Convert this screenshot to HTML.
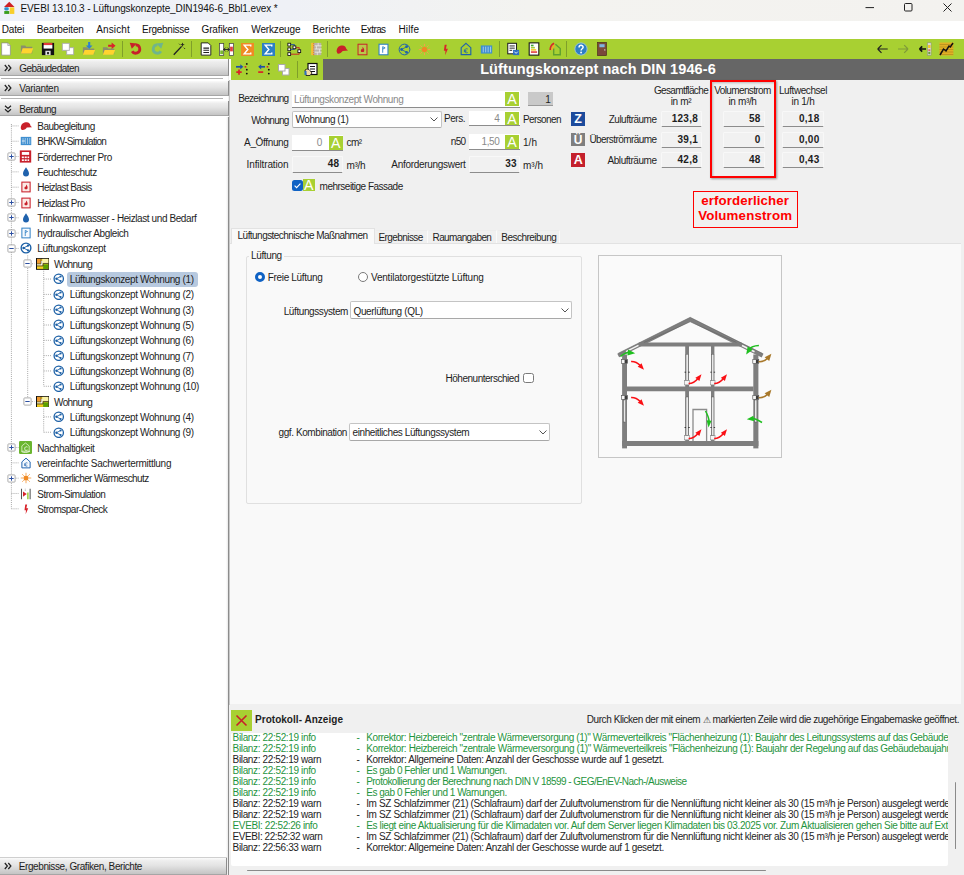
<!DOCTYPE html>
<html lang="de"><head><meta charset="utf-8"><title>EVEBI</title><style>
html,body{margin:0;padding:0}
body{width:964px;height:875px;position:relative;overflow:hidden;background:#f0f0f0;font-family:"Liberation Sans",sans-serif;font-size:10px;color:#000}
.t{position:absolute;white-space:nowrap;font-size:10px;line-height:12px;letter-spacing:-0.37px;color:#1e1e1e}
.b{font-weight:bold}
.v{font-weight:bold;font-size:10px;letter-spacing:.25px}
.g{color:#8a8a8a}
.gr{color:#1f9440}
.hd{position:absolute;left:0;width:228.5px;background:linear-gradient(#fbfbfb,#ededed 18%,#e4e4e4 45%,#c4c4c4);border-right:1px solid #8c8c8c;border-bottom:1px solid #a6a6a6;box-sizing:border-box}
.A{position:absolute;background:#a8d032;color:#fff;font-size:14.2px;line-height:14px;text-align:center;overflow:hidden;font-family:"Liberation Sans",sans-serif}
.fld{position:absolute;background:#fff;border-bottom:1px solid #8c8c8c;box-sizing:border-box}
.ro{position:absolute;background:#f1f1f1;border:1px solid #f8f8f8;border-bottom:1px solid #8c8c8c;border-radius:1.5px;box-sizing:border-box}
.cb{position:absolute;background:#fff;border:1px solid #c4c4c4;border-bottom-color:#a8a8a8;border-radius:2px;box-sizing:border-box}
</style></head><body>
<div style="position:absolute;left:0px;top:0px;width:964px;height:21px;background:linear-gradient(90deg,#eef1fa,#eff1f6 30%,#f3f3f0 55%,#f3f2ef)"></div>
<svg style="position:absolute;left:4px;top:0.6px" width="10.5" height="13.6" viewBox="0 0 12 14"><path d="M6 0 L12 6 H0 Z" fill="#cf2026"/><rect x=".3" y="6.500" width="5.200" height="3.600" rx="1.600" fill="#2f8fd0"/><rect x="6.600" y="6.500" width="5.200" height="7.500" fill="#f8cf2c"/><rect x=".3" y="10.700" width="5.700" height="3.300" fill="#3a9e1f"/></svg>
<div class="t " style="left:20.5px;top:2.8px;letter-spacing:-0.12px;color:#111">EVEBI 13.10.3 - Lüftungskonzepte_DIN1946-6_Bbl1.evex *</div>
<svg style="position:absolute;left:864px;top:2px" width="90" height="12" viewBox="0 0 90 12"><path d="M1.500 5.600h8.500" stroke="#222" stroke-width="1" fill="none"/><rect x="40.500" y="1.500" width="7.500" height="7.500" rx="1" stroke="#222" stroke-width="1" fill="none"/><path d="M79.500 1.500l8 8M87.500 1.500l-8 8" stroke="#222" stroke-width="1" fill="none"/></svg>
<div style="position:absolute;left:0px;top:21px;width:964px;height:18px;background:#fff"></div>
<div class="t " style="left:1.8px;top:23.8px;color:#111;letter-spacing:-0.191px;">Datei</div>
<div class="t " style="left:36.8px;top:23.8px;color:#111;letter-spacing:-0.145px;">Bearbeiten</div>
<div class="t " style="left:96.3px;top:23.8px;color:#111;letter-spacing:0.108px;">Ansicht</div>
<div class="t " style="left:142px;top:23.8px;color:#111;letter-spacing:-0.266px;">Ergebnisse</div>
<div class="t " style="left:201.5px;top:23.8px;color:#111;letter-spacing:-0.133px;">Grafiken</div>
<div class="t " style="left:251.3px;top:23.8px;color:#111;letter-spacing:-0.154px;">Werkzeuge</div>
<div class="t " style="left:312.5px;top:23.8px;color:#111;letter-spacing:0.108px;">Berichte</div>
<div class="t " style="left:360.8px;top:23.8px;color:#111;letter-spacing:-0.608px;">Extras</div>
<div class="t " style="left:398.5px;top:23.8px;color:#111;letter-spacing:0.108px;">Hilfe</div>
<div style="position:absolute;left:0px;top:39px;width:964px;height:20.2px;background:#a8d032"></div>
<svg style="position:absolute;left:-1.0px;top:42.0px" width="14" height="14" viewBox="0 0 16 16"><path d="M3 1h7l3 3v11H3z" fill="#fff" stroke="#888" stroke-width=".8"/><path d="M10 1v3h3" fill="#ddd" stroke="#888" stroke-width=".6"/></svg>
<svg style="position:absolute;left:20.0px;top:42.0px" width="14" height="14" viewBox="0 0 16 16"><path d="M1 4h5l1 1.5h7V13H1z" fill="#8a8f6a"/><path d="M3 7h12l-2 6H1z" fill="#ffd42e"/></svg>
<svg style="position:absolute;left:40.5px;top:42.0px" width="14" height="14" viewBox="0 0 16 16"><rect x="1" y="1" width="14" height="14" fill="#111"/><rect x="3" y="1" width="10" height="2.5" fill="#e23a3a"/><rect x="3" y="3.5" width="10" height="4" fill="#fff"/><rect x="5" y="10" width="6" height="5" fill="#ddd"/><rect x="7" y="11.5" width="2" height="2.5" fill="#111"/></svg>
<svg style="position:absolute;left:60.5px;top:42.0px" width="14" height="14" viewBox="0 0 16 16"><rect x="6.5" y="6.5" width="8" height="8" fill="#fff" stroke="#aaa" stroke-width="1"/><rect x="1.5" y="1.5" width="8" height="8" fill="#fff" stroke="#aaa" stroke-width="1"/></svg>
<svg style="position:absolute;left:81.5px;top:42.0px" width="14" height="14" viewBox="0 0 16 16"><path d="M1 6h5l1 1.5h7V14H1z" fill="#8a8f6a"/><path d="M3 9h12l-2 5.5H1z" fill="#ffd42e"/><path d="M7 0h2.4v4H12L8.2 8 4.4 4H7z" fill="#2f7fd0"/></svg>
<svg style="position:absolute;left:102.0px;top:42.0px" width="14" height="14" viewBox="0 0 16 16"><path d="M1 6h5l1 1.5h7V14H1z" fill="#8a8f6a"/><path d="M3 9h12l-2 5.5H1z" fill="#ffd42e"/><path d="M7 3h4V.5l4.5 3.8L11 8V5.5H7z" fill="#d8232a"/></svg>
<div style="position:absolute;left:121.5px;top:41px;width:1px;height:16px;background:#7f9f2a"></div>
<svg style="position:absolute;left:129.0px;top:42.0px" width="14" height="14" viewBox="0 0 16 16"><path d="M7.500 3.400A4.700 4.700 0 1 1 3.600 10.500" fill="none" stroke="#c8202a" stroke-width="3.200"/><path d="M.8 .8l8 .8-5.600 6z" fill="#c8202a"/></svg>
<svg style="position:absolute;left:149.5px;top:42.0px" width="14" height="14" viewBox="0 0 16 16"><path d="M8.500 3.400A4.700 4.700 0 1 0 12.400 10.500" fill="none" stroke="#6fb58c" stroke-width="3.200"/><path d="M15.200 .8l-8 .8 5.600 6z" fill="#6fb58c"/></svg>
<svg style="position:absolute;left:172.0px;top:42.0px" width="14" height="14" viewBox="0 0 16 16"><path d="M2 14.5L11 5" stroke="#222" stroke-width="1.6" fill="none"/><path d="M12 1v4M10 3h4M13.5 6.5l1.5 1.5M8 2l1 1" stroke="#222" stroke-width="1" fill="none"/></svg>
<div style="position:absolute;left:191px;top:41px;width:1px;height:16px;background:#7f9f2a"></div>
<svg style="position:absolute;left:198.5px;top:42.0px" width="14" height="14" viewBox="0 0 16 16"><path d="M2.5 1h8l3 3v11h-11z" fill="#fff" stroke="#222" stroke-width="1.1"/><path d="M5 7h6.5M5 9.5h6.5M5 12h6.5" stroke="#222" stroke-width="1.2"/></svg>
<svg style="position:absolute;left:219.0px;top:41.5px" width="15" height="15" viewBox="0 0 16 16"><rect x="0.5" y="1.5" width="4.5" height="13" fill="#fff" stroke="#444" stroke-width=".8"/><rect x="11" y="1.5" width="4.5" height="13" fill="#fff" stroke="#444" stroke-width=".8"/><rect x="1.3" y="9" width="3" height="4" fill="#7ab82f"/><rect x="11.8" y="5" width="3" height="5" fill="#e04040"/><path d="M5 8h6M5 8l2-2M5 8l2 2M11 8l-2-2M11 8l-2 2" stroke="#222" stroke-width="1" fill="none"/></svg>
<svg style="position:absolute;left:241.0px;top:42.5px" width="13" height="13" viewBox="0 0 16 16"><rect x="0" y="0" width="16" height="16" fill="#f08a24"/><path d="M12 4.2V2.6H4l4.4 5.4L4 13.4h8v-1.6" fill="none" stroke="#fff" stroke-width="1.8"/></svg>
<svg style="position:absolute;left:262.0px;top:42.5px" width="13" height="13" viewBox="0 0 16 16"><rect x="0" y="0" width="16" height="16" fill="#2d7fc4"/><path d="M12 4.2V2.6H4l4.4 5.4L4 13.4h8v-1.6" fill="none" stroke="#fff" stroke-width="1.8"/></svg>
<div style="position:absolute;left:279.5px;top:41px;width:1px;height:16px;background:#7f9f2a"></div>
<svg style="position:absolute;left:287.0px;top:41.5px" width="15" height="15" viewBox="0 0 16 16"><path d="M3 2.800h5v2.500M3 7.800h5V5.500" fill="none" stroke="#1f4fa8" stroke-width="1"/><path d="M9 6h4v3M3 13h10v-3" fill="none" stroke="#c8202a" stroke-width="1"/><rect x=".9" y="1.300" width="3" height="3" fill="#fff" stroke="#111" stroke-width=".9"/><rect x=".9" y="6.300" width="3" height="3" fill="#fff" stroke="#111" stroke-width=".9"/><rect x=".9" y="11.400" width="3" height="3" fill="#fff" stroke="#111" stroke-width=".9"/><rect x="6.400" y="4.200" width="3" height="3" fill="#fff" stroke="#111" stroke-width=".9"/><rect x="11.600" y="8.300" width="3" height="3" fill="#fff" stroke="#111" stroke-width=".9"/></svg>
<svg style="position:absolute;left:309.0px;top:42.0px" width="14" height="14" viewBox="0 0 16 16"><rect x="2.500" y="1" width="11.500" height="14" fill="#b9b4aa"/><path d="M3.500 1v14" stroke="#f2c12e" stroke-width="2.200"/><path d="M5.300 1v14" stroke="#e8862a" stroke-width="1.400" stroke-dasharray="1.500 1"/><path d="M6.500 4.400h8M6.500 8h8M6.500 11.600h8" stroke="#f0ede6" stroke-width="1"/><path d="M10.500 1v3.400M8.500 4.400V8M12 8v3.600M9.500 11.600V15" stroke="#f0ede6" stroke-width=".8"/></svg>
<div style="position:absolute;left:326.5px;top:41px;width:1px;height:16px;background:#7f9f2a"></div>
<svg style="position:absolute;left:335.0px;top:42.5px" width="13" height="13" viewBox="0 0 16 16"><path d="M2 10.5C2 5 5.5 3 9 3c3 0 4.500 2 5 4.500l2 1.800-6.500 .5C8 12 5 13.500 3 13z" fill="#c8202a"/></svg>
<svg style="position:absolute;left:356.0px;top:42.5px" width="13" height="13" viewBox="0 0 16 16"><rect x="2.5" y="1.5" width="11" height="13" fill="#b9c94a" stroke="#c8202a" stroke-width="1.2"/><path d="M8 4.500c2 2 2.500 3.500 2 5.500-.4 1.500-3.600 1.500-4 0-.3-1.300.5-2 1-3 .3 1 .8 1 1 0z" fill="#c8202a"/></svg>
<svg style="position:absolute;left:377.0px;top:42.5px" width="13" height="13" viewBox="0 0 16 16"><rect x="2.5" y="1.500" width="11" height="13" fill="#fff" stroke="#2d7fc4" stroke-width="1.3"/><path d="M7 12V4.500l3 1.500-3 1.500" fill="none" stroke="#2d7fc4" stroke-width="1.1"/></svg>
<svg style="position:absolute;left:397.5px;top:42.5px" width="13" height="13" viewBox="0 0 16 16"><circle cx="8" cy="8" r="6.6" fill="none" stroke="#1f62ad" stroke-width="1.2"/><circle cx="10.6" cy="4.600" r="1.700" fill="#1f62ad"/><circle cx="10.600" cy="11.400" r="1.700" fill="#1f62ad"/><circle cx="4.400" cy="8" r="1.700" fill="#1f62ad"/><path d="M4.400 8L10.600 4.600M4.400 8l6.200 3.400" stroke="#1f62ad" stroke-width="1"/></svg>
<svg style="position:absolute;left:418.0px;top:42.5px" width="13" height="13" viewBox="0 0 16 16"><circle cx="8" cy="8" r="3.400" fill="#f08a24"/><path d="M8 1v3M8 12v3M1 8h3M12 8h3M3 3l2 2M11 11l2 2M13 3l-2 2M3 13l2-2" stroke="#f5a04a" stroke-width="1.200"/></svg>
<svg style="position:absolute;left:438.5px;top:42.5px" width="13" height="13" viewBox="0 0 16 16"><path d="M7 2h2.500L8.500 7H11l-3.500 8 .5-5.500H6z" fill="#d8232a"/></svg>
<svg style="position:absolute;left:458.5px;top:42.0px" width="14" height="14" viewBox="0 0 16 16"><path d="M8 1.500l5.500 5V14.500h-11V6.500z" fill="none" stroke="#1f62ad" stroke-width="1.300"/><path d="M10 8c-2-1-3.500 0-3.500 2s1.500 3 3.500 2M5.500 9.500h3M5.500 11h3" fill="none" stroke="#1f62ad" stroke-width=".9"/></svg>
<svg style="position:absolute;left:479.5px;top:42.5px" width="13" height="13" viewBox="0 0 16 16"><rect x="1" y="3" width="14" height="10" fill="#3f8fd0"/><path d="M4 4.500v7M7 4.500v7M10 4.500v7M13 4.500v7" stroke="#bcd9f0" stroke-width="1"/></svg>
<div style="position:absolute;left:498.5px;top:41px;width:1px;height:16px;background:#7f9f2a"></div>
<svg style="position:absolute;left:506.0px;top:42.0px" width="14" height="14" viewBox="0 0 16 16"><rect x="2" y="1.500" width="10" height="12" fill="#fff" stroke="#222" stroke-width="1.200"/><path d="M4 4.500h6M4 7h6M4 9.500h3" stroke="#222" stroke-width="1.100"/><rect x="8" y="9" width="7" height="6" fill="#2d6fc0"/><path d="M9.500 11l2 2 2-2" stroke="#fff" fill="none" stroke-width="1"/></svg>
<svg style="position:absolute;left:526.5px;top:42.0px" width="14" height="14" viewBox="0 0 16 16"><rect x="2.500" y="1" width="11" height="14" fill="#fff" stroke="#111" stroke-width="1.200"/><path d="M4.500 4h3" stroke="#3aa535" stroke-width="1.800"/><path d="M4.500 6.500h4.500" stroke="#a6ce39" stroke-width="1.800"/><path d="M4.500 9h6" stroke="#f6c92b" stroke-width="1.800"/><path d="M4.500 11.500h7" stroke="#e23a3a" stroke-width="1.800"/></svg>
<svg style="position:absolute;left:548.0px;top:42.0px" width="14" height="14" viewBox="0 0 16 16"><path d="M8.500 2.500L14 7.500v7H6.500v-7" fill="none" stroke="#5fa02f" stroke-width="1.600"/><path d="M7 1.500C4 3 2.500 5.500 2.500 9" fill="none" stroke="#d8232a" stroke-width="1.800"/><path d="M7.500 4C5.500 5 4.700 7 4.700 9.500" fill="none" stroke="#f6a52b" stroke-width="1.600"/></svg>
<div style="position:absolute;left:566px;top:41px;width:1px;height:16px;background:#7f9f2a"></div>
<svg style="position:absolute;left:573.5px;top:42.0px" width="14" height="14" viewBox="0 0 16 16"><circle cx="8" cy="8" r="7" fill="#2d7fc4" stroke="#9cc4e8" stroke-width="1"/><path d="M5.800 6.200c0-3.200 4.600-3 4.600-.3 0 1.800-2.300 1.800-2.300 3.800" fill="none" stroke="#fff" stroke-width="1.700"/><circle cx="8.100" cy="12" r="1.100" fill="#fff"/></svg>
<svg style="position:absolute;left:594.5px;top:42.0px" width="14" height="14" viewBox="0 0 16 16"><rect x="3" y="0.500" width="10" height="15" fill="#7a4a3a" stroke="#4a2a20" stroke-width=".8"/><rect x="5" y="2.500" width="6" height="3.500" fill="#7fb4e0"/><circle cx="11.200" cy="9" r=".8" fill="#ddd"/></svg>
<svg style="position:absolute;left:877px;top:42px" width="80" height="14" viewBox="0 0 80 14"><path d="M.7 7h10M.7 7l3.800-3.800M.7 7l3.800 3.800" stroke="#222" stroke-width="1.200" fill="none"/><path d="M21 7h10M31 7l-3.800-3.800M31 7l-3.800 3.800" stroke="#7f9a3a" stroke-width="1.200" fill="none"/><path d="M42.500 7h6.500M42.500 7l2.700-2.700M42.500 7l2.700 2.700" stroke="#111" stroke-width="1.700" fill="none"/><rect x="50.500" y=".8" width="3.600" height="12.400" fill="#d8dccf" stroke="#8a8a7a" stroke-width=".5"/><rect x="51.100" y="3" width="2.400" height="3" fill="#f0c820"/><rect x="51.300" y="7.500" width="2" height="1.200" fill="#e23a3a"/><rect x="51.300" y="9.800" width="2" height="2.400" fill="#6a9a3a"/><rect x="62.500" y=".5" width="13.800" height="13" fill="#e2b024"/><path d="M62.500 2.500h13.800M62.500 5h13.800M62.500 7.500h13.800M62.500 10h13.800M62.500 12.500h13.800" stroke="#b08a20" stroke-width=".7"/><path d="M63 13l3.500-6 2.500 1.800 3-4.800 1.300 1L76 1" stroke="#111" stroke-width="1.500" fill="none"/></svg>
<div style="position:absolute;left:0px;top:59px;width:228px;height:816px;background:#fff"></div>
<div style="position:absolute;left:226px;top:117px;width:2.5px;height:758px;background:linear-gradient(90deg,#fff,#dedede)"></div>
<div style="position:absolute;left:228px;top:117px;width:1px;height:758px;background:#8c8c8c"></div>
<div style="position:absolute;left:229px;top:59px;width:2px;height:21px;background:#fff"></div>
<div class="hd" style="top:59px;height:16.5px"></div>
<svg style="position:absolute;left:4px;top:64px" width="8" height="8" viewBox="0 0 8 8"><path d="M.8 1l2.600 3L.8 7M4.300 1l2.600 3-2.600 3" stroke="#222" stroke-width="1.200" fill="none"/></svg>
<div class="t " style="left:19.3px;top:63.0px;letter-spacing:-0.545px;">Gebäudedaten</div>
<div style="position:absolute;left:1px;top:78px;width:222px;height:1px;background:#b4b4b4"></div>
<div class="hd" style="top:80.5px;height:15.5px"></div>
<svg style="position:absolute;left:4px;top:84.2px" width="8" height="8" viewBox="0 0 8 8"><path d="M.8 1l2.600 3L.8 7M4.300 1l2.600 3-2.600 3" stroke="#222" stroke-width="1.200" fill="none"/></svg>
<div class="t " style="left:19.3px;top:83.2px;letter-spacing:-0.303px;">Varianten</div>
<div style="position:absolute;left:1px;top:98px;width:222px;height:1px;background:#b4b4b4"></div>
<div class="hd" style="top:100.5px;height:15.5px"></div>
<svg style="position:absolute;left:4px;top:104.5px" width="8" height="8" viewBox="0 0 8 8"><path d="M1 .8l3 2.600 3-2.600M1 4.300l3 2.600 3-2.600" stroke="#222" stroke-width="1.200" fill="none"/></svg>
<div class="t " style="left:19.3px;top:103.5px;letter-spacing:-0.479px;">Beratung</div>
<div style="position:absolute;left:0px;top:856.5px;width:227px;height:1px;background:#cfcfcf"></div>
<div class="hd" style="top:857.5px;height:17.5px;width:227px"></div>
<svg style="position:absolute;left:4px;top:861.5px" width="8" height="8" viewBox="0 0 8 8"><path d="M.8 1l2.600 3L.8 7M4.300 1l2.600 3-2.600 3" stroke="#222" stroke-width="1.200" fill="none"/></svg>
<div class="t " style="left:18.8px;top:860.6px;letter-spacing:-0.414px;">Ergebnisse, Grafiken, Berichte</div>
<svg style="position:absolute;left:0;top:117px" width="226" height="410" viewBox="0 0 226 410"><path d="M11.4 7V391.8M27.7 138.43V284.59M43.7 153.74V269.27M43.7 291.59V315.22M11.4 8.9H18.5M11.4 24.22H18.5M11.4 39.53H18.5M11.4 54.85H18.5M11.4 70.16H18.5M11.4 85.48H18.5M11.4 100.8H18.5M11.4 116.11H18.5M11.4 131.43H18.5M27.7 146.74H34.3M43.7 162.06H52M43.7 177.38H52M43.7 192.69H52M43.7 208.01H52M43.7 223.32H52M43.7 238.64H52M43.7 253.96H52M43.7 269.27H52M27.7 284.59H34.3M43.7 299.9H52M43.7 315.22H52M11.4 330.54H18.5M11.4 345.85H18.5M11.4 361.17H18.5M11.4 376.48H18.5M11.4 391.8H18.5" stroke="#a8a8a8" stroke-width="1" stroke-dasharray="1 1.100" fill="none"/></svg>
<div style="position:absolute;left:66.7px;top:271.8px;width:131.3px;height:15px;background:#b7c9df;border-radius:3px"></div>
<svg style="position:absolute;left:19.5px;top:119.9px" width="12" height="12" viewBox="0 0 16 16"><path d="M1 11C1 5 5 3 9 3c3 0 4.500 2 5 4.500l2 2-7 .5C8 12.500 4.500 14 2 13z" fill="#c8202a"/></svg>
<div class="t " style="left:37.3px;top:120.9px;letter-spacing:-0.500px;">Baubegleitung</div>
<svg style="position:absolute;left:19.5px;top:135.2px" width="12" height="12" viewBox="0 0 16 16"><rect x="1" y="2.500" width="14" height="11" fill="#3f8fd0"/><path d="M4 4v8M7 4v8M10 4v8M13 4v8" stroke="#bcd9f0" stroke-width="1"/><path d="M2.500 8h4" stroke="#fff" stroke-width="1"/></svg>
<div class="t " style="left:37.3px;top:136.2px;letter-spacing:-0.734px;">BHKW-Simulation</div>
<svg style="position:absolute;left:6.9px;top:152.03px" width="9" height="9" viewBox="0 0 9 9"><rect x=".9" y=".9" width="7.200" height="7.200" rx=".8" fill="#fff" stroke="#a4a4a4" stroke-width=".9"/><path d="M2.300 4.500h4.400" stroke="#2c4fa0" stroke-width="1"/><path d="M4.500 2.300v4.400" stroke="#2c4fa0" stroke-width="1"/></svg>
<svg style="position:absolute;left:19.0px;top:150.0px" width="13" height="13" viewBox="0 0 16 16"><rect x="1" y="0.500" width="14" height="15" fill="#c8202a"/><rect x="3.500" y="2.500" width="9" height="3.500" fill="#fff"/><rect x="3.500" y="8" width="2.500" height="2" fill="#fff"/><rect x="7" y="8" width="2.500" height="2" fill="#fff"/><rect x="10.500" y="8" width="2" height="2" fill="#fff"/><rect x="3.500" y="11.500" width="2.500" height="2" fill="#fff"/><rect x="7" y="11.500" width="2.500" height="2" fill="#fff"/><rect x="10.500" y="11.500" width="2" height="2" fill="#fff"/></svg>
<div class="t " style="left:37.3px;top:151.5px;letter-spacing:-0.424px;">Förderrechner Pro</div>
<svg style="position:absolute;left:19.5px;top:165.8px" width="12" height="12" viewBox="0 0 16 16"><path d="M8 1.500c2 3.500 4 5.500 4 8.500a4 4 0 0 1-8 0c0-3 2-5 4-8.500z" fill="#1f62ad"/></svg>
<div class="t " style="left:37.3px;top:166.8px;letter-spacing:-0.428px;">Feuchteschutz</div>
<svg style="position:absolute;left:19.5px;top:181.2px" width="12" height="12" viewBox="0 0 16 16"><rect x="2.500" y="1.500" width="11" height="13" fill="#fbe9e4" stroke="#c8202a" stroke-width="1.400"/><path d="M8 4.500c2 2 2.500 3.500 2 5.500-.4 1.500-3.600 1.500-4 0-.3-1.300.5-2 1-3 .3 1 .8 1 1 0z" fill="#c8202a"/></svg>
<div class="t " style="left:37.3px;top:182.2px;letter-spacing:-0.594px;">Heizlast Basis</div>
<svg style="position:absolute;left:6.9px;top:197.98px" width="9" height="9" viewBox="0 0 9 9"><rect x=".9" y=".9" width="7.200" height="7.200" rx=".8" fill="#fff" stroke="#a4a4a4" stroke-width=".9"/><path d="M2.300 4.500h4.400" stroke="#2c4fa0" stroke-width="1"/><path d="M4.500 2.300v4.400" stroke="#2c4fa0" stroke-width="1"/></svg>
<svg style="position:absolute;left:19.5px;top:196.5px" width="12" height="12" viewBox="0 0 16 16"><rect x="2.500" y="1.500" width="11" height="13" fill="#fbe9e4" stroke="#c8202a" stroke-width="1.400"/><path d="M8 4.500c2 2 2.500 3.500 2 5.500-.4 1.500-3.600 1.500-4 0-.3-1.300.5-2 1-3 .3 1 .8 1 1 0z" fill="#c8202a"/></svg>
<div class="t " style="left:37.3px;top:197.5px;letter-spacing:-0.531px;">Heizlast Pro</div>
<svg style="position:absolute;left:6.9px;top:213.3px" width="9" height="9" viewBox="0 0 9 9"><rect x=".9" y=".9" width="7.200" height="7.200" rx=".8" fill="#fff" stroke="#a4a4a4" stroke-width=".9"/><path d="M2.300 4.500h4.400" stroke="#2c4fa0" stroke-width="1"/><path d="M4.500 2.300v4.400" stroke="#2c4fa0" stroke-width="1"/></svg>
<svg style="position:absolute;left:19.5px;top:211.8px" width="12" height="12" viewBox="0 0 16 16"><path d="M8 1.500c2 3.500 4 5.500 4 8.500a4 4 0 0 1-8 0c0-3 2-5 4-8.500z" fill="#1f62ad"/></svg>
<div class="t " style="left:37.3px;top:212.8px;letter-spacing:-0.404px;">Trinkwarmwasser - Heizlast und Bedarf</div>
<svg style="position:absolute;left:6.9px;top:228.61px" width="9" height="9" viewBox="0 0 9 9"><rect x=".9" y=".9" width="7.200" height="7.200" rx=".8" fill="#fff" stroke="#a4a4a4" stroke-width=".9"/><path d="M2.300 4.500h4.400" stroke="#2c4fa0" stroke-width="1"/><path d="M4.500 2.300v4.400" stroke="#2c4fa0" stroke-width="1"/></svg>
<svg style="position:absolute;left:19.5px;top:227.1px" width="12" height="12" viewBox="0 0 16 16"><rect x="2.500" y="1.500" width="11" height="13" fill="#f4f9fe" stroke="#2d7fc4" stroke-width="1.300"/><path d="M7 12V4.500l3 1.500-3 1.500" fill="none" stroke="#2d7fc4" stroke-width="1.100"/></svg>
<div class="t " style="left:37.3px;top:228.1px;letter-spacing:-0.403px;">hydraulischer Abgleich</div>
<svg style="position:absolute;left:6.9px;top:243.93px" width="9" height="9" viewBox="0 0 9 9"><rect x=".9" y=".9" width="7.200" height="7.200" rx=".8" fill="#fff" stroke="#a4a4a4" stroke-width=".9"/><path d="M2.300 4.500h4.400" stroke="#2c4fa0" stroke-width="1"/></svg>
<svg style="position:absolute;left:19.5px;top:242.4px" width="12" height="12" viewBox="0 0 16 16"><circle cx="8" cy="8" r="6.500" fill="#fff" stroke="#1c60a6" stroke-width="1.800"/><circle cx="10.600" cy="4.900" r="1.500" fill="#1c60a6"/><circle cx="10.600" cy="11.100" r="1.500" fill="#1c60a6"/><circle cx="4.700" cy="8" r="1.600" fill="#1c60a6"/><path d="M4.700 8L10.600 4.900M4.700 8l5.900 3.100" stroke="#1c60a6" stroke-width="1.200"/></svg>
<div class="t " style="left:37.3px;top:243.4px;letter-spacing:-0.337px;">Lüftungskonzept</div>
<svg style="position:absolute;left:23.2px;top:259.24px" width="9" height="9" viewBox="0 0 9 9"><rect x=".9" y=".9" width="7.200" height="7.200" rx=".8" fill="#fff" stroke="#a4a4a4" stroke-width=".9"/><path d="M2.300 4.500h4.400" stroke="#2c4fa0" stroke-width="1"/></svg>
<svg style="position:absolute;left:35.500px;top:257.8px" width="13.300" height="11.800" viewBox="0 0 16 16" preserveAspectRatio="none"><rect x=".6" y=".6" width="14.800" height="14.800" fill="#f6d020" stroke="#111" stroke-width="1.200"/><rect x="1.200" y="1.200" width="4.600" height="6.300" fill="#f09a30"/><rect x="7.600" y="1.200" width="7.200" height="6" fill="#faf2a8"/><rect x="8.600" y="8.600" width="6.200" height="6.200" fill="#5aa000"/><path d="M1.200 9.300h5.800V4.200" stroke="#f4f4f4" stroke-width="1.900" fill="none"/><path d="M1.200 10.800h7.300V7.400h6.300" stroke="#222" stroke-width=".9" fill="none"/><path d="M6 1.200v6.700H1.200" stroke="#222" stroke-width=".7" fill="none"/></svg>
<div class="t " style="left:54px;top:258.7px;letter-spacing:-0.622px;">Wohnung</div>
<svg style="position:absolute;left:53.2px;top:273.3px" width="11.5" height="11.5" viewBox="0 0 16 16"><circle cx="8" cy="8" r="6.500" fill="#fff" stroke="#1c60a6" stroke-width="1.800"/><circle cx="10.600" cy="4.900" r="1.500" fill="#1c60a6"/><circle cx="10.600" cy="11.100" r="1.500" fill="#1c60a6"/><circle cx="4.700" cy="8" r="1.600" fill="#1c60a6"/><path d="M4.700 8L10.600 4.900M4.700 8l5.900 3.100" stroke="#1c60a6" stroke-width="1.200"/></svg>
<div class="t " style="left:69.7px;top:274.1px;letter-spacing:-0.366px;">Lüftungskonzept Wohnung (1)</div>
<svg style="position:absolute;left:53.2px;top:288.6px" width="11.5" height="11.5" viewBox="0 0 16 16"><circle cx="8" cy="8" r="6.500" fill="#fff" stroke="#1c60a6" stroke-width="1.800"/><circle cx="10.600" cy="4.900" r="1.500" fill="#1c60a6"/><circle cx="10.600" cy="11.100" r="1.500" fill="#1c60a6"/><circle cx="4.700" cy="8" r="1.600" fill="#1c60a6"/><path d="M4.700 8L10.600 4.900M4.700 8l5.900 3.100" stroke="#1c60a6" stroke-width="1.200"/></svg>
<div class="t " style="left:69.7px;top:289.4px;letter-spacing:-0.366px;">Lüftungskonzept Wohnung (2)</div>
<svg style="position:absolute;left:53.2px;top:303.9px" width="11.5" height="11.5" viewBox="0 0 16 16"><circle cx="8" cy="8" r="6.500" fill="#fff" stroke="#1c60a6" stroke-width="1.800"/><circle cx="10.600" cy="4.900" r="1.500" fill="#1c60a6"/><circle cx="10.600" cy="11.100" r="1.500" fill="#1c60a6"/><circle cx="4.700" cy="8" r="1.600" fill="#1c60a6"/><path d="M4.700 8L10.600 4.900M4.700 8l5.900 3.100" stroke="#1c60a6" stroke-width="1.200"/></svg>
<div class="t " style="left:69.7px;top:304.7px;letter-spacing:-0.366px;">Lüftungskonzept Wohnung (3)</div>
<svg style="position:absolute;left:53.2px;top:319.3px" width="11.5" height="11.5" viewBox="0 0 16 16"><circle cx="8" cy="8" r="6.500" fill="#fff" stroke="#1c60a6" stroke-width="1.800"/><circle cx="10.600" cy="4.900" r="1.500" fill="#1c60a6"/><circle cx="10.600" cy="11.100" r="1.500" fill="#1c60a6"/><circle cx="4.700" cy="8" r="1.600" fill="#1c60a6"/><path d="M4.700 8L10.600 4.900M4.700 8l5.900 3.100" stroke="#1c60a6" stroke-width="1.200"/></svg>
<div class="t " style="left:69.7px;top:320.0px;letter-spacing:-0.366px;">Lüftungskonzept Wohnung (5)</div>
<svg style="position:absolute;left:53.2px;top:334.6px" width="11.5" height="11.5" viewBox="0 0 16 16"><circle cx="8" cy="8" r="6.500" fill="#fff" stroke="#1c60a6" stroke-width="1.800"/><circle cx="10.600" cy="4.900" r="1.500" fill="#1c60a6"/><circle cx="10.600" cy="11.100" r="1.500" fill="#1c60a6"/><circle cx="4.700" cy="8" r="1.600" fill="#1c60a6"/><path d="M4.700 8L10.600 4.900M4.700 8l5.900 3.100" stroke="#1c60a6" stroke-width="1.200"/></svg>
<div class="t " style="left:69.7px;top:335.3px;letter-spacing:-0.366px;">Lüftungskonzept Wohnung (6)</div>
<svg style="position:absolute;left:53.2px;top:349.9px" width="11.5" height="11.5" viewBox="0 0 16 16"><circle cx="8" cy="8" r="6.500" fill="#fff" stroke="#1c60a6" stroke-width="1.800"/><circle cx="10.600" cy="4.900" r="1.500" fill="#1c60a6"/><circle cx="10.600" cy="11.100" r="1.500" fill="#1c60a6"/><circle cx="4.700" cy="8" r="1.600" fill="#1c60a6"/><path d="M4.700 8L10.600 4.900M4.700 8l5.900 3.100" stroke="#1c60a6" stroke-width="1.200"/></svg>
<div class="t " style="left:69.7px;top:350.6px;letter-spacing:-0.366px;">Lüftungskonzept Wohnung (7)</div>
<svg style="position:absolute;left:53.2px;top:365.2px" width="11.5" height="11.5" viewBox="0 0 16 16"><circle cx="8" cy="8" r="6.500" fill="#fff" stroke="#1c60a6" stroke-width="1.800"/><circle cx="10.600" cy="4.900" r="1.500" fill="#1c60a6"/><circle cx="10.600" cy="11.100" r="1.500" fill="#1c60a6"/><circle cx="4.700" cy="8" r="1.600" fill="#1c60a6"/><path d="M4.700 8L10.600 4.900M4.700 8l5.900 3.100" stroke="#1c60a6" stroke-width="1.200"/></svg>
<div class="t " style="left:69.7px;top:366.0px;letter-spacing:-0.366px;">Lüftungskonzept Wohnung (8)</div>
<svg style="position:absolute;left:53.2px;top:380.5px" width="11.5" height="11.5" viewBox="0 0 16 16"><circle cx="8" cy="8" r="6.500" fill="#fff" stroke="#1c60a6" stroke-width="1.800"/><circle cx="10.600" cy="4.900" r="1.500" fill="#1c60a6"/><circle cx="10.600" cy="11.100" r="1.500" fill="#1c60a6"/><circle cx="4.700" cy="8" r="1.600" fill="#1c60a6"/><path d="M4.700 8L10.600 4.900M4.700 8l5.900 3.100" stroke="#1c60a6" stroke-width="1.200"/></svg>
<div class="t " style="left:69.7px;top:381.3px;letter-spacing:-0.359px;">Lüftungskonzept Wohnung (10)</div>
<svg style="position:absolute;left:23.2px;top:397.09px" width="9" height="9" viewBox="0 0 9 9"><rect x=".9" y=".9" width="7.200" height="7.200" rx=".8" fill="#fff" stroke="#a4a4a4" stroke-width=".9"/><path d="M2.300 4.500h4.400" stroke="#2c4fa0" stroke-width="1"/></svg>
<svg style="position:absolute;left:35.500px;top:395.7px" width="13.300" height="11.800" viewBox="0 0 16 16" preserveAspectRatio="none"><rect x=".6" y=".6" width="14.800" height="14.800" fill="#f6d020" stroke="#111" stroke-width="1.200"/><rect x="1.200" y="1.200" width="4.600" height="6.300" fill="#f09a30"/><rect x="7.600" y="1.200" width="7.200" height="6" fill="#faf2a8"/><rect x="8.600" y="8.600" width="6.200" height="6.200" fill="#5aa000"/><path d="M1.200 9.300h5.800V4.200" stroke="#f4f4f4" stroke-width="1.900" fill="none"/><path d="M1.200 10.800h7.300V7.400h6.300" stroke="#222" stroke-width=".9" fill="none"/><path d="M6 1.200v6.700H1.200" stroke="#222" stroke-width=".7" fill="none"/></svg>
<div class="t " style="left:54px;top:396.6px;letter-spacing:-0.622px;">Wohnung</div>
<svg style="position:absolute;left:53.2px;top:411.2px" width="11.5" height="11.5" viewBox="0 0 16 16"><circle cx="8" cy="8" r="6.500" fill="#fff" stroke="#1c60a6" stroke-width="1.800"/><circle cx="10.600" cy="4.900" r="1.500" fill="#1c60a6"/><circle cx="10.600" cy="11.100" r="1.500" fill="#1c60a6"/><circle cx="4.700" cy="8" r="1.600" fill="#1c60a6"/><path d="M4.700 8L10.600 4.900M4.700 8l5.900 3.100" stroke="#1c60a6" stroke-width="1.200"/></svg>
<div class="t " style="left:69.7px;top:411.9px;letter-spacing:-0.366px;">Lüftungskonzept Wohnung (4)</div>
<svg style="position:absolute;left:53.2px;top:426.5px" width="11.5" height="11.5" viewBox="0 0 16 16"><circle cx="8" cy="8" r="6.500" fill="#fff" stroke="#1c60a6" stroke-width="1.800"/><circle cx="10.600" cy="4.900" r="1.500" fill="#1c60a6"/><circle cx="10.600" cy="11.100" r="1.500" fill="#1c60a6"/><circle cx="4.700" cy="8" r="1.600" fill="#1c60a6"/><path d="M4.700 8L10.600 4.900M4.700 8l5.900 3.100" stroke="#1c60a6" stroke-width="1.200"/></svg>
<div class="t " style="left:69.7px;top:427.2px;letter-spacing:-0.366px;">Lüftungskonzept Wohnung (9)</div>
<svg style="position:absolute;left:6.9px;top:443.04px" width="9" height="9" viewBox="0 0 9 9"><rect x=".9" y=".9" width="7.200" height="7.200" rx=".8" fill="#fff" stroke="#a4a4a4" stroke-width=".9"/><path d="M2.300 4.500h4.400" stroke="#2c4fa0" stroke-width="1"/><path d="M4.500 2.300v4.400" stroke="#2c4fa0" stroke-width="1"/></svg>
<svg style="position:absolute;left:19.0px;top:441.0px" width="13" height="13" viewBox="0 0 16 16"><rect x="0" y="0" width="16" height="16" rx="1.500" fill="#6ab52f"/><path d="M8 2.500l4.500 3.500v6.500h-9V6z" fill="none" stroke="#d8f0c0" stroke-width="1.100"/><path d="M10.500 7.500c-2-1-3.500 0-3.500 2s1.500 2.500 3.500 1.500M3 13c2.500 1.500 7.500 1.500 10.500-.5" fill="none" stroke="#fff" stroke-width="1"/></svg>
<div class="t " style="left:37.3px;top:442.5px;letter-spacing:-0.408px;">Nachhaltigkeit</div>
<svg style="position:absolute;left:19.5px;top:456.9px" width="12" height="12" viewBox="0 0 16 16"><path d="M8 1.500l5.500 5V14.500h-11V6.500z" fill="#f4f9fe" stroke="#1f62ad" stroke-width="1.300"/><path d="M10 8c-2-1-3.500 0-3.500 2s1.500 3 3.500 2M5.500 9.500h3M5.500 11h3" fill="none" stroke="#1f62ad" stroke-width=".9"/></svg>
<div class="t " style="left:37.3px;top:457.9px;letter-spacing:-0.290px;">vereinfachte Sachwertermittlung</div>
<svg style="position:absolute;left:6.9px;top:473.67px" width="9" height="9" viewBox="0 0 9 9"><rect x=".9" y=".9" width="7.200" height="7.200" rx=".8" fill="#fff" stroke="#a4a4a4" stroke-width=".9"/><path d="M2.300 4.500h4.400" stroke="#2c4fa0" stroke-width="1"/><path d="M4.500 2.300v4.400" stroke="#2c4fa0" stroke-width="1"/></svg>
<svg style="position:absolute;left:19.5px;top:472.2px" width="12" height="12" viewBox="0 0 16 16"><circle cx="8" cy="8" r="3.400" fill="#f08a24"/><path d="M8 1v3M8 12v3M1 8h3M12 8h3M3 3l2 2M11 11l2 2M13 3l-2 2M3 13l2-2" stroke="#f5a04a" stroke-width="1.200"/></svg>
<div class="t " style="left:37.3px;top:473.2px;letter-spacing:-0.595px;">Sommerlicher Wärmeschutz</div>
<svg style="position:absolute;left:19.5px;top:487.5px" width="12" height="12" viewBox="0 0 16 16"><path d="M2 1v14M13.500 1v14" stroke="#555" stroke-width="1.400"/><path d="M4 4.500l5 3.500-5 3.500z" fill="#d8232a"/><path d="M10.500 6v9" stroke="#9ace3a" stroke-width="2"/><path d="M7 1v4" stroke="#888" stroke-width="1" stroke-dasharray="1 1"/></svg>
<div class="t " style="left:37.3px;top:488.5px;letter-spacing:-0.542px;">Strom-Simulation</div>
<svg style="position:absolute;left:19.5px;top:502.8px" width="12" height="12" viewBox="0 0 16 16"><path d="M7 2h2.500L8.500 7H11l-3.500 8 .5-5.500H6z" fill="#d8232a"/></svg>
<div class="t " style="left:37.3px;top:503.8px;letter-spacing:-0.525px;">Stromspar-Check</div>
<div style="position:absolute;left:231px;top:59px;width:92.3px;height:20.8px;background:#a8d032"></div>
<div style="position:absolute;left:323.3px;top:59px;width:640.7px;height:20.5px;background:#666"></div>
<div class="t " style="left:448px;width:300px;text-align:center;top:60.2px;font-weight:bold;font-size:14.500px;letter-spacing:0px;color:#fff;line-height:18px"><span style="letter-spacing:0.090px;">Lüftungskonzept nach DIN 1946-6</span></div>
<svg style="position:absolute;left:235px;top:62px" width="15" height="15" viewBox="0 0 15 15"><path d="M1 4.800h5.500" stroke="#1f4fa8" stroke-width="1.700" fill="none"/><path d="M5.300 2.200l3 2.600-3 2.600z" fill="#1f4fa8"/><path d="M1.300 10.100h5.400M4 7.400v5.400" stroke="#d8232a" stroke-width="1.700"/><circle cx="11.800" cy="1.900" r=".9" fill="#111"/><circle cx="11.800" cy="7.700" r=".9" fill="#111"/><circle cx="11.800" cy="11.600" r=".9" fill="#111"/><rect x="9.700" y="4" width="1.600" height="1.600" fill="#d8232a"/></svg>
<svg style="position:absolute;left:256.5px;top:62px" width="15" height="15" viewBox="0 0 15 15"><path d="M3 4.800h5" stroke="#1f4fa8" stroke-width="1.700" fill="none"/><path d="M4.200 2.200l-3 2.600 3 2.600z" fill="#1f4fa8"/><path d="M1.200 10.100h5" stroke="#d8232a" stroke-width="1.700"/><circle cx="11.800" cy="1.900" r=".9" fill="#111"/><circle cx="11.800" cy="7.700" r=".9" fill="#111"/><circle cx="11.800" cy="11.600" r=".9" fill="#111"/><rect x="9.700" y="4" width="1.600" height="1.600" fill="#d8232a"/></svg>
<svg style="position:absolute;left:277px;top:63px" width="13" height="13" viewBox="0 0 13 13"><rect x="5.500" y="5.500" width="6.500" height="6.500" fill="#fff" stroke="#aaa" stroke-width="1"/><rect x="1.500" y="1.500" width="6.500" height="6.500" fill="#fff" stroke="#aaa" stroke-width="1"/></svg>
<div style="position:absolute;left:296.5px;top:61px;width:1px;height:17px;background:#7f9f2a"></div>
<svg style="position:absolute;left:304px;top:62px" width="15" height="15" viewBox="0 0 15 15"><rect x="4" y="1.500" width="9" height="11" fill="#fff" stroke="#111" stroke-width="1.200"/><path d="M6 4.500h5M6 7h5M6 9.500h5" stroke="#111" stroke-width="1"/><path d="M1 8c2-1.500 4-1 5 .5l2 2.500-2 2.500H2z" fill="#f0d9a0" stroke="#111" stroke-width=".8"/><rect x="0.500" y="9" width="2" height="4" fill="#2d6fc0"/></svg>
<div style="position:absolute;left:229px;top:80px;width:1px;height:625px;background:#c8c8c8"></div>
<div class="t " style="right:675.5px;top:93.4px;letter-spacing:-0.679px;">Bezeichnung</div>
<div class="fld" style="left:292px;top:91px;width:228px;height:16.5px"></div>
<div class="t g" style="left:294px;top:93.5px;letter-spacing:-0.413px;">Lüftungskonzept Wohnung</div>
<div class="A" style="left:505px;top:92px;width:14px;height:14px;line-height:15px">A</div>
<div style="position:absolute;left:527.5px;top:91.7px;width:25.5px;height:14.5px;background:#c9c9c9;border-bottom:1px solid #9a9a9a;box-sizing:border-box"></div>
<div class="t " style="right:413.5px;top:93.5px;">1</div>
<div class="t " style="right:675.5px;top:114.6px;letter-spacing:-0.775px;">Wohnung</div>
<div class="cb" style="left:291.500px;top:110.500px;width:150px;height:17.500px"></div>
<div class="t " style="left:295.5px;top:114.3px;letter-spacing:-0.442px;">Wohnung (1)</div>
<svg style="position:absolute;left:430px;top:117.0px" width="8" height="5" viewBox="0 0 8 5"><path d="M.5 .5l3.500 3.500L7.500 .5" stroke="#555" stroke-width="1" fill="none"/></svg>
<div class="t " style="left:444px;top:112.6px;letter-spacing:-0.454px;">Pers.</div>
<div class="fld" style="left:469px;top:110.5px;width:51px;height:15.5px"></div>
<div class="t g" style="right:464.5px;top:113.0px;">4</div>
<div class="A" style="left:505px;top:111.5px;width:14px;height:13.5px;line-height:14.5px">A</div>
<div class="t " style="left:523px;top:114.0px;letter-spacing:-0.615px;">Personen</div>
<div class="t " style="right:675.5px;top:136.8px;letter-spacing:-0.358px;">A_Öffnung</div>
<div class="fld" style="left:292px;top:134.5px;width:51px;height:16px"></div>
<div class="t g" style="right:642px;top:137.0px;">0</div>
<div class="A" style="left:328.5px;top:135.5px;width:14.5px;height:14px;line-height:15px">A</div>
<div class="t " style="left:346.5px;top:137.3px;letter-spacing:-0.549px;">cm²</div>
<div class="t " style="right:498.5px;top:136.3px;letter-spacing:-0.675px;">n50</div>
<div class="fld" style="left:469px;top:133.5px;width:51px;height:16px"></div>
<div class="t g" style="right:464.5px;top:136.0px;">1,50</div>
<div class="A" style="left:505px;top:134.5px;width:14px;height:14px;line-height:15px">A</div>
<div class="t " style="left:523px;top:137.3px;letter-spacing:0.037px;">1/h</div>
<div class="t " style="right:675.5px;top:158.7px;letter-spacing:-0.118px;">Infiltration</div>
<div class="ro" style="left:292px;top:156px;width:51px;height:16.5px"></div>
<div class="t v" style="right:624.7px;top:158.2px;">48</div>
<div class="t " style="left:346.5px;top:159.5px;letter-spacing:-0.286px;">m³/h</div>
<div class="t " style="right:498.5px;top:158.7px;letter-spacing:-0.293px;">Anforderungswert</div>
<div class="ro" style="left:469px;top:156px;width:51px;height:16.5px"></div>
<div class="t v" style="right:447.2px;top:158.2px;">33</div>
<div class="t " style="left:523px;top:159.5px;letter-spacing:0.000px;">m³/h</div>
<div style="position:absolute;left:291.5px;top:180.3px;width:11px;height:11px;background:#0f62c4;border-radius:2.500px"><svg width="11" height="11" viewBox="0 0 11 11" style="display:block"><path d="M2.600 5.600l2 2 3.800-4" stroke="#fff" stroke-width="1.100" fill="none"/></svg></div>
<div class="A" style="left:303px;top:179.2px;width:11.6px;height:12px;line-height:13px">A</div>
<div class="t " style="left:319.6px;top:180.6px;letter-spacing:-0.510px;">mehrseitige Fassade</div>
<div style="position:absolute;left:571.200px;top:112px;width:14px;height:13.700px;background:#1d4b9c;color:#fff;font-weight:bold;font-size:12.500px;line-height:14px;text-align:center">Z</div>
<div style="position:absolute;left:571.200px;top:132.5px;width:14px;height:13.700px;background:#7f7f7f;color:#fff;font-weight:bold;font-size:12.500px;line-height:14px;text-align:center"><span style="position:relative;top:.6px;font-size:12px">Ü</span></div>
<div style="position:absolute;left:571.200px;top:153px;width:14px;height:13.700px;background:#c4202c;color:#fff;font-weight:bold;font-size:12.500px;line-height:14px;text-align:center">A</div>
<div class="t " style="right:307.5px;top:114.2px;letter-spacing:-0.510px;">Zulufträume</div>
<div class="t " style="right:307.5px;top:134.4px;letter-spacing:-0.565px;">Überströmräume</div>
<div class="t " style="right:307.5px;top:155.0px;letter-spacing:-0.450px;">Ablufträume</div>
<div class="t " style="left:531px;width:300px;text-align:center;top:85.1px;"><span style="letter-spacing:-0.626px;">Gesamtfläche</span></div>
<div class="t " style="left:531px;width:300px;text-align:center;top:96.4px;"><span style="letter-spacing:-0.319px;">in m²</span></div>
<div class="t " style="left:592.5px;width:300px;text-align:center;top:85.1px;"><span style="letter-spacing:-0.637px;">Volumenstrom</span></div>
<div class="t " style="left:592.5px;width:300px;text-align:center;top:96.4px;"><span style="letter-spacing:-0.348px;">in m³/h</span></div>
<div class="t " style="left:653px;width:300px;text-align:center;top:85.1px;"><span style="letter-spacing:-0.430px;">Luftwechsel</span></div>
<div class="t " style="left:653px;width:300px;text-align:center;top:96.4px;"><span style="letter-spacing:-0.267px;">in 1/h</span></div>
<div class="ro" style="left:660.5px;top:111px;width:41.5px;height:16px"></div>
<div class="t v" style="right:266px;top:113.1px;">123,8</div>
<div class="ro" style="left:723px;top:111px;width:41.5px;height:16px"></div>
<div class="t v" style="right:203.5px;top:113.1px;">58</div>
<div class="ro" style="left:782px;top:111px;width:41.5px;height:16px"></div>
<div class="t v" style="right:144.5px;top:113.1px;">0,18</div>
<div class="ro" style="left:660.5px;top:131.8px;width:41.5px;height:16px"></div>
<div class="t v" style="right:266px;top:133.9px;">39,1</div>
<div class="ro" style="left:723px;top:131.8px;width:41.5px;height:16px"></div>
<div class="t v" style="right:203.5px;top:133.9px;">0</div>
<div class="ro" style="left:782px;top:131.8px;width:41.5px;height:16px"></div>
<div class="t v" style="right:144.5px;top:133.9px;">0,00</div>
<div class="ro" style="left:660.5px;top:152.3px;width:41.5px;height:16px"></div>
<div class="t v" style="right:266px;top:154.4px;">42,8</div>
<div class="ro" style="left:723px;top:152.3px;width:41.5px;height:16px"></div>
<div class="t v" style="right:203.5px;top:154.4px;">48</div>
<div class="ro" style="left:782px;top:152.3px;width:41.5px;height:16px"></div>
<div class="t v" style="right:144.5px;top:154.4px;">0,43</div>
<div style="position:absolute;left:710.1px;top:79.8px;width:66.1px;height:98.1px;border:2px solid #ff0000;box-sizing:border-box;box-shadow:1.200px 1.200px 2px rgba(0,0,0,.38), inset 1.200px 1.200px 2px rgba(0,0,0,.2)"></div>
<div style="position:absolute;left:693.1px;top:190.9px;width:105.2px;height:37.1px;border:1.500px solid #ff0000;box-sizing:border-box;background:#f0f0f0"></div>
<div class="t " style="left:595.2px;width:300px;text-align:center;top:193.4px;color:#ff0000;font-weight:bold;font-size:13.300px;line-height:16px;"><span style="letter-spacing:0.091px;">erforderlicher</span></div>
<div class="t " style="left:595.2px;width:300px;text-align:center;top:208.3px;color:#ff0000;font-weight:bold;font-size:13.300px;line-height:16px;"><span style="letter-spacing:0.164px;">Volumenstrom</span></div>
<div style="position:absolute;left:230px;top:242.5px;width:731px;height:461px;background:#f9f9f9;border-top:1px solid #e2e2e2;box-sizing:border-box"></div>
<div style="position:absolute;left:230.5px;top:227.5px;width:144px;height:16px;background:#f9f9f9;border:1px solid #e2e2e2;border-bottom:none;box-sizing:border-box"></div>
<div class="t " style="left:237.6px;top:229.7px;letter-spacing:-0.545px;">Lüftungstechnische Maßnahmen</div>
<div style="position:absolute;left:375.5px;top:230px;width:52.0px;height:12.5px;background:#f0f0f0;border-right:1px solid #fafafa;border-top:1px solid #ececec;box-sizing:border-box"></div>
<div style="position:absolute;left:428.5px;top:230px;width:68.0px;height:12.5px;background:#f0f0f0;border-right:1px solid #fafafa;border-top:1px solid #ececec;box-sizing:border-box"></div>
<div style="position:absolute;left:497.5px;top:230px;width:62.5px;height:12.5px;background:#f0f0f0;border-right:1px solid #fafafa;border-top:1px solid #ececec;box-sizing:border-box"></div>
<div class="t " style="left:378.5px;top:232.0px;letter-spacing:-0.582px;">Ergebnisse</div>
<div class="t " style="left:432.6px;top:232.0px;letter-spacing:-0.629px;">Raumangaben</div>
<div class="t " style="left:501.3px;top:232.0px;letter-spacing:-0.518px;">Beschreibung</div>
<div style="position:absolute;left:245.5px;top:256px;width:336px;height:248px;border:1px solid #e0e0e0;box-sizing:border-box;border-radius:2px"></div>
<div style="position:absolute;left:249px;top:250px;width:35px;height:11px;background:#f9f9f9"></div>
<div class="t " style="left:251px;top:250.0px;letter-spacing:-0.365px;">Lüftung</div>
<div style="position:absolute;left:254.8px;top:271.9px;width:10.4px;height:10.4px;border:3px solid #0f62c4;border-radius:50%;box-sizing:border-box;background:#fff"></div>
<div class="t " style="left:267.8px;top:272.3px;letter-spacing:-0.331px;">Freie Lüftung</div>
<div style="position:absolute;left:357.9px;top:271.9px;width:10.4px;height:10.4px;border:1px solid #7a7a7a;border-radius:50%;box-sizing:border-box;background:#fff"></div>
<div class="t " style="left:371px;top:272.3px;letter-spacing:-0.216px;">Ventilatorgestützte Lüftung</div>
<div class="t " style="right:616px;top:305.7px;letter-spacing:-0.411px;">Lüftungssystem</div>
<div class="cb" style="left:350px;top:301.400px;width:221.600px;height:17.200px"></div>
<div class="t " style="left:353.5px;top:305.5px;letter-spacing:-0.358px;">Querlüftung (QL)</div>
<svg style="position:absolute;left:560.7px;top:308.0px" width="8" height="5" viewBox="0 0 8 5"><path d="M.5 .5l3.500 3.500L7.500 .5" stroke="#555" stroke-width="1" fill="none"/></svg>
<div class="t " style="right:445px;top:372.9px;letter-spacing:-0.482px;">Höhenunterschied</div>
<div style="position:absolute;left:523.4px;top:372.8px;width:10.6px;height:10px;border:1px solid #7a7a7a;border-radius:2.500px;box-sizing:border-box;background:#fff"></div>
<div class="t " style="right:617px;top:427.3px;letter-spacing:-0.410px;">ggf. Kombination</div>
<div class="cb" style="left:349.200px;top:423.400px;width:200.400px;height:17.200px"></div>
<div class="t " style="left:352.5px;top:427.2px;letter-spacing:-0.395px;">einheitliches Lüftungssystem</div>
<svg style="position:absolute;left:538.7px;top:429.8px" width="8" height="5" viewBox="0 0 8 5"><path d="M.5 .5l3.500 3.500L7.500 .5" stroke="#555" stroke-width="1" fill="none"/></svg>
<div style="position:absolute;left:598.2px;top:254.7px;width:183.8px;height:203.8px;border:1px solid #c6c6c6;box-sizing:border-box;background:#fafafa"></div>
<svg style="position:absolute;left:598px;top:254px" width="185" height="206" viewBox="0 0 185 206">
<g fill="none" stroke="#7e7e7e">
<path d="M20.2 101.5 L92.2 65.5 L164.6 101.7" stroke-width="4.100" stroke-linejoin="miter"/>
<path d="M40.8 90.45 H143.5" stroke-width="4.100"/>
<path d="M26.55 100.5 V194.4" stroke-width="4.900"/>
<path d="M157.85 100.5 V194.4" stroke-width="5.100"/>
<path d="M29 134.95 H155.5" stroke-width="4.700"/>
<path d="M24.1 189.5 H160.4" stroke-width="4.800"/>
<path d="M89.1 92 V187.5" stroke-width="3.800"/>
<path d="M114.7 92 V187.5" stroke-width="3.400"/>
<path d="M95 187 V155.5 H108.6 V187" stroke-width="1.300" stroke="#8c8c8c"/>
</g>
<g stroke="#5e5e5e" stroke-width=".5" fill="none">
<path d="M20.2 99.3 L92.2 63.3 L164.6 99.5"/>
<path d="M46 88.4 L92.2 67.8 L138.5 88.4"/>
</g>
<g fill="#f6f6f6" stroke="#4a4a4a" stroke-width=".6">
<rect x="23.5" y="105.4" width="6" height="4.100"/>
<rect x="23.5" y="141.4" width="6" height="4.100"/>
<rect x="154.8" y="105.4" width="6" height="4.100"/>
<rect x="154.8" y="141.4" width="6" height="4.100"/>
<rect x="86.6" y="126.6" width="5" height="4.300" stroke="#8a8a8a"/>
<rect x="112.4" y="126.6" width="4.600" height="4.300" stroke="#8a8a8a"/>
<rect x="86.6" y="181.6" width="5" height="4.300" stroke="#8a8a8a"/>
<rect x="112.4" y="181.6" width="4.600" height="4.300" stroke="#8a8a8a"/>
<rect x="25.5" y="146" width="2.200" height="22" fill="#e8e8e8" stroke-width=".4"/>
<rect x="156.7" y="146" width="2.200" height="22" fill="#e8e8e8" stroke-width=".4"/>
<rect x="88" y="100.2" width="2.300" height="26.500" fill="#e8e8e8" stroke-width=".4"/>
<rect x="113.6" y="100.2" width="2.300" height="26.500" fill="#e8e8e8" stroke-width=".4"/>
<rect x="88" y="143" width="2.300" height="38.500" fill="#e8e8e8" stroke-width=".4"/>
<rect x="113.6" y="143" width="2.300" height="38.500" fill="#e8e8e8" stroke-width=".4"/>
</g>
<g stroke="#f2f2f2" stroke-width="1.600" fill="none">
<path d="M28 97.6 L40.5 91.35"/>
<path d="M144 91.45 L156.5 97.7"/>
</g>
<g fill="#3c3c3c">
<rect x="26.6" y="105.7" width="2.700" height="3.500"/>
<rect x="26.6" y="141.7" width="2.700" height="3.500"/>
<rect x="157.9" y="105.7" width="2.700" height="3.500"/>
<rect x="157.9" y="141.7" width="2.700" height="3.500"/>
</g>
<g stroke="#222" stroke-width=".8">
<path d="M86.5 118.2h1.600M90.2 118.2h1.600M112.3 118.2h1.400M115.7 118.2h1.400"/>
<path d="M86.5 173.5h1.600M90.2 173.5h1.600M112.3 173.5h1.400M115.7 173.5h1.400"/>
</g>
<path d="M33.1 107.4 Q38.3 107.2 42.31 111.62" stroke="#fa0f14" stroke-width="1.5" fill="none"/><path d="M46 115.7 L39.71 112.63 L43.56 109.14 Z" fill="#fa0f14"/><path d="M33.1 143.4 Q38.3 143.2 42.31 147.62" stroke="#fa0f14" stroke-width="1.5" fill="none"/><path d="M46 151.7 L39.71 148.63 L43.56 145.14 Z" fill="#fa0f14"/><path d="M90.6 129.5 Q95.8 129.6 99.99 124.54" stroke="#fa0f14" stroke-width="1.5" fill="none"/><path d="M103.5 120.3 L101.36 126.96 L97.35 123.65 Z" fill="#fa0f14"/><path d="M116.2 129.5 Q121.3 129.6 125.49 124.54" stroke="#fa0f14" stroke-width="1.5" fill="none"/><path d="M129 120.3 L126.86 126.96 L122.85 123.65 Z" fill="#fa0f14"/><path d="M90.6 184.5 Q95.8 184.6 99.99 179.54" stroke="#fa0f14" stroke-width="1.5" fill="none"/><path d="M103.5 175.3 L101.36 181.96 L97.35 178.65 Z" fill="#fa0f14"/><path d="M116.2 184.5 Q121.3 184.6 125.49 179.54" stroke="#fa0f14" stroke-width="1.5" fill="none"/><path d="M129 175.3 L126.86 181.96 L122.85 178.65 Z" fill="#fa0f14"/><path d="M22.5 102.3 Q28 98.3 30.74 98.6" stroke="#1fbf1f" stroke-width="1.5" fill="none"/><path d="M37.2 99.3 L29.41 101.57 L30.08 95.41 Z" fill="#1fbf1f"/><path d="M160.9 91.5 Q153.5 92 151.67 94.9" stroke="#1fbf1f" stroke-width="1.5" fill="none"/><path d="M148.2 100.4 L149.66 92.46 L154.74 95.66 Z" fill="#1fbf1f"/><path d="M164 168.5 Q157 164.3 154.76 164.57" stroke="#1fbf1f" stroke-width="1.5" fill="none"/><path d="M148.8 165.3 L155.42 161.72 L156.08 167.18 Z" fill="#1fbf1f"/><path d="M107.5 157 Q111.3 164 111.0 167.52" stroke="#1fbf1f" stroke-width="1.5" fill="none"/><path d="M110.5 173.5 L108.6 166.31 L113.58 166.73 Z" fill="#1fbf1f"/><path d="M160.7 107.6 Q166.5 108 169.56 104.31" stroke="#a8782a" stroke-width="1.5" fill="none"/><path d="M173.4 99.7 L171.23 107.0 L166.62 103.17 Z" fill="#a8782a"/><path d="M160.7 143.6 Q166.5 144 169.56 140.31" stroke="#a8782a" stroke-width="1.5" fill="none"/><path d="M173.4 135.7 L171.23 143.0 L166.62 139.17 Z" fill="#a8782a"/></svg>
<div style="position:absolute;left:231px;top:710px;width:21px;height:20.5px;background:#a8d032"></div>
<svg style="position:absolute;left:235px;top:714px" width="13" height="13" viewBox="0 0 13 13"><path d="M1.500 1.500l10 10M11.500 1.500l-10 10" stroke="#c8202a" stroke-width="1.600" fill="none"/></svg>
<div class="t b" style="left:255px;top:714.0px;letter-spacing:0.033px;">Protokoll- Anzeige</div>
<div class="t " style="right:5px;top:714.0px;letter-spacing:-0.427px;">Durch Klicken der mit einem <span style="font-size:9px">⚠</span> markierten Zeile wird die zugehörige Eingabemaske geöffnet.</div>
<div style="position:absolute;left:231px;top:732.5px;width:717px;height:133px;background:#fff;border-radius:2px;overflow:hidden"><div class="t gr" style="left:1.6px;top:-0.6px;letter-spacing:-0.352px;">Bilanz: 22:52:19 info</div><div class="t gr" style="left:125.5px;top:-0.6px;">-</div><div class="t gr" style="left:135.2px;top:-0.6px;letter-spacing:-0.391px;">Korrektor: Heizbereich "zentrale Wärmeversorgung (1)" Wärmeverteilkreis "Flächenheizung (1): Baujahr des Leitungssystems auf das Gebäudebaujahr gesetzt.</div><div class="t gr" style="left:1.6px;top:10.4px;letter-spacing:-0.352px;">Bilanz: 22:52:19 info</div><div class="t gr" style="left:125.5px;top:10.4px;">-</div><div class="t gr" style="left:135.2px;top:10.4px;letter-spacing:-0.384px;">Korrektor: Heizbereich "zentrale Wärmeversorgung (1)" Wärmeverteilkreis "Flächenheizung (1): Baujahr der Regelung auf das Gebäudebaujahr gesetzt.</div><div class="t " style="left:1.6px;top:21.4px;letter-spacing:-0.360px;">Bilanz: 22:52:19 warn</div><div class="t " style="left:125.5px;top:21.4px;">-</div><div class="t " style="left:135.2px;top:21.4px;letter-spacing:-0.370px;">Korrektor: Allgemeine Daten: Anzahl der Geschosse wurde auf 1 gesetzt.</div><div class="t gr" style="left:1.6px;top:32.4px;letter-spacing:-0.352px;">Bilanz: 22:52:19 info</div><div class="t gr" style="left:125.5px;top:32.4px;">-</div><div class="t gr" style="left:135.2px;top:32.4px;letter-spacing:-0.460px;">Es gab 0 Fehler und 1 Warnungen.</div><div class="t gr" style="left:1.6px;top:43.4px;letter-spacing:-0.352px;">Bilanz: 22:52:19 info</div><div class="t gr" style="left:125.5px;top:43.4px;">-</div><div class="t gr" style="left:135.2px;top:43.4px;letter-spacing:-0.538px;">Protokollierung der Berechnung nach DIN V 18599 - GEG/EnEV-Nach-/Ausweise</div><div class="t gr" style="left:1.6px;top:54.4px;letter-spacing:-0.352px;">Bilanz: 22:52:19 info</div><div class="t gr" style="left:125.5px;top:54.4px;">-</div><div class="t gr" style="left:135.2px;top:54.4px;letter-spacing:-0.460px;">Es gab 0 Fehler und 1 Warnungen.</div><div class="t " style="left:1.6px;top:65.4px;letter-spacing:-0.360px;">Bilanz: 22:52:19 warn</div><div class="t " style="left:125.5px;top:65.4px;">-</div><div class="t " style="left:135.2px;top:65.4px;letter-spacing:-0.372px;">Im SZ Schlafzimmer (21) (Schlafraum) darf der Zuluftvolumenstrom für die Nennlüftung nicht kleiner als 30 (15 m³/h je Person) ausgelegt werden.</div><div class="t " style="left:1.6px;top:76.4px;letter-spacing:-0.360px;">Bilanz: 22:52:19 warn</div><div class="t " style="left:125.5px;top:76.4px;">-</div><div class="t " style="left:135.2px;top:76.4px;letter-spacing:-0.372px;">Im SZ Schlafzimmer (21) (Schlafraum) darf der Zuluftvolumenstrom für die Nennlüftung nicht kleiner als 30 (15 m³/h je Person) ausgelegt werden.</div><div class="t gr" style="left:1.6px;top:87.4px;letter-spacing:-0.402px;">EVEBI: 22:52:26 info</div><div class="t gr" style="left:125.5px;top:87.4px;">-</div><div class="t gr" style="left:135.2px;top:87.4px;letter-spacing:-0.369px;">Es liegt eine Aktualisierung für die Klimadaten vor. Auf dem Server liegen Klimadaten bis 03.2025 vor. Zum Aktualisieren gehen Sie bitte auf Extras.</div><div class="t " style="left:1.6px;top:98.4px;letter-spacing:-0.431px;">EVEBI: 22:52:32 warn</div><div class="t " style="left:125.5px;top:98.4px;">-</div><div class="t " style="left:135.2px;top:98.4px;letter-spacing:-0.372px;">Im SZ Schlafzimmer (21) (Schlafraum) darf der Zuluftvolumenstrom für die Nennlüftung nicht kleiner als 30 (15 m³/h je Person) ausgelegt werden.</div><div class="t " style="left:1.6px;top:109.4px;letter-spacing:-0.360px;">Bilanz: 22:56:33 warn</div><div class="t " style="left:125.5px;top:109.4px;">-</div><div class="t " style="left:135.2px;top:109.4px;letter-spacing:-0.370px;">Korrektor: Allgemeine Daten: Anzahl der Geschosse wurde auf 1 gesetzt.</div></div>
<div style="position:absolute;left:954.5px;top:782px;width:1.5px;height:66.5px;background:#8a8a8a;border-radius:1px"></div>
<div style="position:absolute;left:247px;top:869.7px;width:519px;height:1.5px;background:#8a8a8a;border-radius:1px"></div>
</body></html>
